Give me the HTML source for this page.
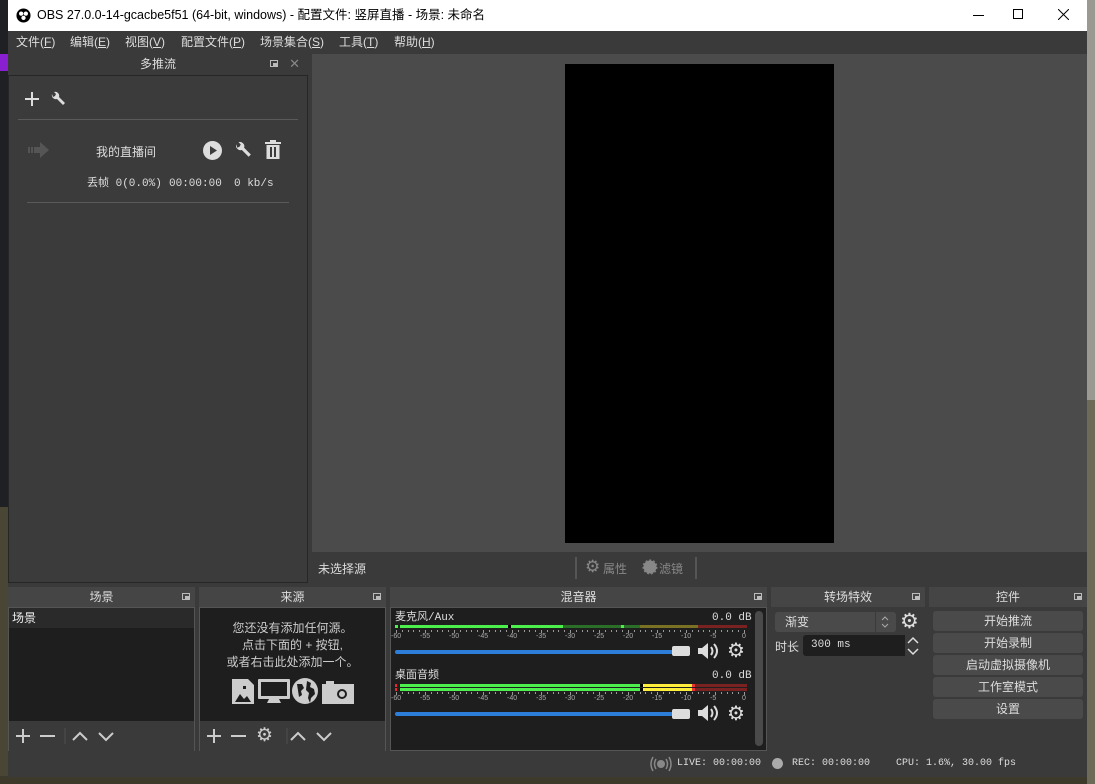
<!DOCTYPE html>
<html><head><meta charset="utf-8"><style>
*{margin:0;padding:0;box-sizing:border-box}
body{width:1095px;height:784px;overflow:hidden;background:#1f2023;font-family:"Liberation Sans","Noto Sans CJK SC",sans-serif;font-size:12px;color:#ddd;position:relative}
.a{position:absolute}
.hd{position:absolute;height:20px;background:#454545;text-align:center;line-height:20px;font-size:12px;color:#ddd}
.fl{position:absolute;right:5px;top:6px;width:8px;height:7px;border:1px solid #bbb}
.fl:after{content:"";position:absolute;left:2px;top:2px;width:5px;height:4px;background:#bbb}
.dk{position:absolute;background:#1e1e1e;border:1px solid #555}
.tb{position:absolute;background:#3a3a3a;height:30px}
.btn{position:absolute;left:933px;width:150px;height:20px;background:#4a4a4a;border-radius:3px;text-align:center;line-height:20px;color:#ddd}
.mono{font-family:"Liberation Mono","Noto Sans CJK SC",monospace}
.tk{position:absolute;font-size:7px;color:#aaa;font-family:"Liberation Sans",sans-serif}
.st{line-height:14px;height:14px}
</style></head><body>
<div class="a" style="left:0;top:54px;width:8px;height:17px;background:#8a1fd1"></div>
<div class="a" style="left:0;top:507px;width:8px;height:277px;background:#4a4636"></div>
<div class="a" style="left:0;top:776px;width:1095px;height:8px;background:#3d3a2c"></div>
<div class="a" style="left:1087px;top:0;width:8px;height:784px;background:#9a9a92"></div>
<div class="a" style="left:1087px;top:400px;width:8px;height:384px;background:#6e6a58"></div>
<div class="a" style="left:8px;top:0;width:1079px;height:777px;background:#3a3a3a"></div>
<div class="a" style="left:8px;top:0;width:1079px;height:31px;background:#fff;color:#000;font-size:12.5px;line-height:31px">
 <svg class="a" style="left:8px;top:8px" width="15" height="15" viewBox="0 0 16 16"><circle cx="8" cy="8" r="7.5" fill="#000"/><circle cx="5.5" cy="6" r="2.3" fill="#fff"/><circle cx="10.5" cy="6" r="2.3" fill="#fff"/><circle cx="8" cy="10.5" r="2.3" fill="#fff"/></svg>
 <span class="a" style="left:29px">OBS 27.0.0-14-gcacbe5f51 (64-bit, windows) - 配置文件: 竖屏直播 - 场景: 未命名</span>
 <div class="a" style="left:965px;top:15px;width:11px;height:1px;background:#000"></div>
 <div class="a" style="left:1005px;top:9px;width:10px;height:10px;border:1px solid #000"></div>
 <svg class="a" style="left:1050px;top:9px" width="11" height="11"><path d="M0 0L11 11M11 0L0 11" stroke="#000" stroke-width="1"/></svg>
</div>
<div class="a" style="left:8px;top:31px;width:1079px;height:22px;background:#3a3a3a;line-height:22px;color:#ddd">
 <span class="a" style="left:8px">文件(<u>F</u>)</span><span class="a" style="left:62px">编辑(<u>E</u>)</span><span class="a" style="left:117px">视图(<u>V</u>)</span><span class="a" style="left:173px">配置文件(<u>P</u>)</span><span class="a" style="left:252px">场景集合(<u>S</u>)</span><span class="a" style="left:331px">工具(<u>T</u>)</span><span class="a" style="left:386px">帮助(<u>H</u>)</span>
</div>
<div class="hd" style="left:8px;top:54px;width:300px;background:#3a3a3a">多推流<div class="fl" style="right:30px"></div><span class="a" style="right:8px;top:0;color:#888;font-size:13px">✕</span></div>
<div class="a" style="left:8px;top:75px;width:300px;height:508px;background:#3b3b3b;border:1px solid #262626"></div>
<div class="a" style="left:25px;top:98px;width:14px;height:2px;background:#ddd"></div><div class="a" style="left:31px;top:92px;width:2px;height:14px;background:#ddd"></div>
<svg class="a" style="left:50px;top:91px" width="16" height="16" viewBox="0 0 16 16"><path d="M2 3a4 4 0 0 0 5 5l6 6 2-2-6-6a4 4 0 0 0-5-5l2 2-1 2-2 1z" fill="#ddd"/></svg>
<div class="a" style="left:18px;top:119px;width:280px;height:1px;background:#5a5a5a"></div>
<svg class="a" style="left:28px;top:141px" width="22" height="18" viewBox="0 0 22 18"><path d="M0 6h2v6H0zM3 6h2v6H3zM6 6h6V1l9 8-9 8v-5H6z" fill="#555"/></svg>
<span class="a" style="left:96px;top:143px;font-size:12px;color:#ddd">我的直播间</span>
<svg class="a" style="left:203px;top:141px" width="19" height="19"><circle cx="9.5" cy="9.5" r="9.5" fill="#ddd"/><path d="M7 5l7 4.5-7 4.5z" fill="#3b3b3b"/></svg>
<svg class="a" style="left:234px;top:141px" width="18" height="18" viewBox="0 0 16 16"><path d="M2 3a4 4 0 0 0 5 5l6 6 2-2-6-6a4 4 0 0 0-5-5l2 2-1 2-2 1z" fill="#ddd"/></svg>
<svg class="a" style="left:265px;top:140px" width="16" height="19"><rect x="0" y="2" width="16" height="2" fill="#ddd"/><rect x="5" y="0" width="6" height="2" fill="#ddd"/><rect x="1.5" y="5" width="13" height="14" fill="#ddd"/><rect x="5" y="7" width="2" height="10" fill="#3b3b3b"/><rect x="9" y="7" width="2" height="10" fill="#3b3b3b"/></svg>
<span class="a mono st" style="left:87px;top:177px;font-size:11px;color:#ddd;white-space:pre">丢帧 0(0.0%)</span>
<span class="a mono st" style="left:169px;top:177px;font-size:11px;color:#ddd">00:00:00</span>
<span class="a mono st" style="left:234px;top:177px;font-size:11px;color:#ddd">0 kb/s</span>
<div class="a" style="left:27px;top:202px;width:262px;height:1px;background:#5a5a5a"></div>
<div class="a" style="left:312px;top:54px;width:775px;height:498px;background:#4b4b4b"></div>
<div class="a" style="left:565px;top:64px;width:269px;height:479px;background:#000"></div>
<span class="a" style="left:318px;top:560px;font-size:12px;color:#ddd">未选择源</span>
<div class="a" style="left:575px;top:557px;width:2px;height:22px;background:#222;border:1px solid #555"></div>
<div class="a" style="left:695px;top:557px;width:2px;height:22px;background:#222;border:1px solid #555"></div>
<span class="a" style="left:585px;top:558px;color:#888;font-size:17px;line-height:18px">⚙</span><span class="a" style="left:603px;top:560px;color:#888">属性</span>
<svg class="a" style="left:642px;top:559px" width="16" height="16"><circle cx="8" cy="8" r="6.5" fill="#888"/><circle cx="8" cy="8" r="7" fill="none" stroke="#888" stroke-dasharray="2 2"/></svg><span class="a" style="left:659px;top:560px;color:#888">滤镜</span>
<div class="hd" style="left:8px;top:587px;width:187px">场景<div class="fl"></div></div>
<div class="dk" style="left:8px;top:607px;width:187px;height:144px;background:#1e1e1e"></div>
<div class="a" style="left:9px;top:608px;width:185px;height:20px;background:#2a2a2a;line-height:20px;padding-left:3px;color:#eee">场景</div>
<div class="tb" style="left:9px;top:721px;width:185px"></div>
<div class="hd" style="left:199px;top:587px;width:187px">来源<div class="fl"></div></div>
<div class="dk" style="left:199px;top:607px;width:187px;height:144px"></div>
<div class="a" style="left:199px;top:620px;width:187px;text-align:center;line-height:17px;color:#ccc;font-size:12px">您还没有添加任何源。<br>点击下面的 + 按钮,<br>或者右击此处添加一个。</div>
<svg class="a" style="left:232px;top:678px" width="122" height="27" viewBox="0 0 122 27">
<path d="M0 1h16l6 6v19H0z" fill="#ccc"/><path d="M3 24l5-8 4 5 3-3 4 6z" fill="#1e1e1e"/><rect x="11" y="8" width="3" height="3" fill="#1e1e1e"/>
<rect x="26" y="1" width="32" height="20" rx="1" fill="#ccc"/><rect x="29" y="4" width="26" height="14" fill="#1e1e1e"/><path d="M37 21h10l2 4H35z" fill="#ccc"/>
<circle cx="73" cy="13" r="13" fill="#ccc"/><path d="M65 6l5 0 2 4-3 3 1 4-3 2zM75 3l4 2-1 4 4 2 1 5-4 4-1 5-2-5 1-5-3-3z" fill="#1e1e1e"/>
<path d="M90 6h4v-3h8v3h20v20H90z" fill="#ccc"/><circle cx="110" cy="16" r="5" fill="#1e1e1e"/><circle cx="110" cy="16" r="3" fill="#ccc"/>
</svg>
<div class="tb" style="left:200px;top:721px;width:185px"></div>
<svg class="a" style="left:14px;top:727px" width="110" height="18" stroke="#ccc" stroke-width="2" fill="none"><path d="M2 9h14M9 2v14M26 9h15"/><path d="M51 1v16" stroke="#444"/><path d="M59 13l7-7 7 7M85 6l7 7 7-7"/></svg>
<svg class="a" style="left:205px;top:727px" width="140" height="18" stroke="#ccc" stroke-width="2" fill="none"><path d="M2 9h14M9 2v14M26 9h15"/><path d="M82 1v16" stroke="#444"/><path d="M86 13l7-7 7 7M112 6l7 7 7-7"/></svg>
<span class="a" style="left:256px;top:724px;color:#ccc;font-size:19px">⚙</span>
<div class="hd" style="left:390px;top:587px;width:377px">混音器<div class="fl"></div></div>
<div class="dk" style="left:390px;top:607px;width:377px;height:144px"></div>
<div class="a" style="left:755px;top:611px;width:8px;height:135px;background:#4a4a4a;border-radius:4px"></div>
<span class="a mono st" style="left:395px;top:611px;font-size:11px;color:#ddd">麦克风/Aux</span>
<span class="a mono st" style="left:712px;top:611px;font-size:11px;color:#ddd">0.0 dB</span>
<div class="a" style="left:395px;top:625px;width:352px;height:3px;background:#7a2121"></div>
<div class="a" style="left:395px;top:625px;width:303px;height:3px;background:#7a7125"></div>
<div class="a" style="left:395px;top:625px;width:245px;height:3px;background:#2a6e27"></div>
<div class="a" style="left:395px;top:625px;width:168px;height:3px;background:#4cf04c"></div>
<div class="a" style="left:398px;top:625px;width:2px;height:3px;background:#1e1e1e"></div>
<div class="a" style="left:508px;top:625px;width:3px;height:3px;background:#000"></div>
<div class="a" style="left:621px;top:625px;width:3px;height:3px;background:#4cf04c"></div>
<span class="a mono st" style="left:395px;top:669px;font-size:11px;color:#ddd">桌面音频</span>
<span class="a mono st" style="left:712px;top:669px;font-size:11px;color:#ddd">0.0 dB</span>
<div class="a" style="left:395px;top:684px;width:352px;height:7px;background:#7a2121"></div>
<div class="a" style="left:395px;top:684px;width:297px;height:7px;background:#ffef3a"></div>
<div class="a" style="left:395px;top:684px;width:247px;height:7px;background:#4cf04c"></div>
<div class="a" style="left:692px;top:684px;width:3px;height:7px;background:#e33"></div>
<div class="a" style="left:395px;top:684px;width:2px;height:7px;background:#e23"></div>
<div class="a" style="left:397px;top:684px;width:3px;height:7px;background:#1e1e1e"></div>
<div class="a" style="left:640px;top:684px;width:3px;height:7px;background:#000"></div>
<div class="a" style="left:395px;top:687px;width:352px;height:1px;background:#1e1e1e"></div>
<div class="a" style="left:395px;top:650px;width:282px;height:4px;background:#2d7ed9;border-radius:2px"></div>
<div class="a" style="left:672px;top:646px;width:18px;height:10px;background:#ddd;border-radius:2px"></div>
<div class="a" style="left:395px;top:712px;width:282px;height:4px;background:#2d7ed9;border-radius:2px"></div>
<div class="a" style="left:672px;top:709px;width:18px;height:10px;background:#ddd;border-radius:2px"></div>
<svg class="a" style="left:697px;top:642px" width="24" height="18"><path d="M1 6h4l6-5v16l-6-5H1z" fill="#ddd"/><path d="M14 5q3 4 0 8M17 2q6 7 0 14" stroke="#ddd" stroke-width="2" fill="none"/></svg>
<svg class="a" style="left:697px;top:704px" width="24" height="18"><path d="M1 6h4l6-5v16l-6-5H1z" fill="#ddd"/><path d="M14 5q3 4 0 8M17 2q6 7 0 14" stroke="#ddd" stroke-width="2" fill="none"/></svg>
<span class="a" style="left:727px;top:638px;font-size:20px;color:#ddd">⚙</span>
<span class="a" style="left:727px;top:701px;font-size:20px;color:#ddd">⚙</span>
<div id="ticks1"></div>
<div class="hd" style="left:771px;top:587px;width:154px">转场特效<div class="fl"></div></div>
<div class="a" style="left:771px;top:607px;width:154px;height:144px;background:#3a3a3a"></div>
<div class="a" style="left:775px;top:612px;width:121px;height:20px;background:#4a4a4a;border-radius:3px;line-height:20px;padding-left:10px;color:#ddd">渐变</div>
<div class="a" style="left:875px;top:612px;width:1px;height:20px;background:#3a3a3a"></div>
<svg class="a" style="left:880px;top:614px" width="10" height="16" stroke="#aaa" stroke-width="1" fill="none"><path d="M2 6l3-3 3 3M2 10l3 3 3-3"/></svg>
<span class="a" style="left:900px;top:609px;font-size:21px;color:#ddd">⚙</span>
<span class="a" style="left:775px;top:638px;color:#ddd">时长</span>
<div class="a" style="left:803px;top:635px;width:118px;height:21px;background:#1e1e1e;border-radius:3px;line-height:21px;padding-left:8px;color:#ddd;font-family:'Liberation Mono',monospace;font-size:11px">300 ms</div>
<div class="a" style="left:905px;top:635px;width:16px;height:21px;background:#3a3a3a"></div>
<svg class="a" style="left:906px;top:636px" width="14" height="20" stroke="#ddd" stroke-width="1.5" fill="none"><path d="M2 7l5-5 5 5M2 13l5 5 5-5"/></svg>
<div class="hd" style="left:929px;top:587px;width:158px">控件<div class="fl"></div></div>
<div class="btn" style="top:611px">开始推流</div>
<div class="btn" style="top:633px">开始录制</div>
<div class="btn" style="top:655px">启动虚拟摄像机</div>
<div class="btn" style="top:677px">工作室模式</div>
<div class="btn" style="top:699px">设置</div>
<svg class="a" style="left:650px;top:756px" width="22" height="16"><circle cx="11" cy="8" r="4" fill="#888"/><path d="M6 3q-3 5 0 10M16 3q3 5 0 10M3 1q-4 7 0 14M19 1q4 7 0 14" stroke="#888" stroke-width="1.5" fill="none"/></svg>
<span class="a mono" style="left:677px;top:758px;font-size:10px;color:#ddd;white-space:pre">LIVE: 00:00:00</span>
<div class="a" style="left:772px;top:758px;width:11px;height:11px;border-radius:50%;background:#aaa"></div>
<span class="a mono" style="left:792px;top:758px;font-size:10px;color:#ddd;white-space:pre">REC: 00:00:00</span>
<span class="a mono" style="left:896px;top:758px;font-size:10px;color:#ddd;white-space:pre">CPU: 1.6%, 30.00 fps</span>
<script>
var labs=["-60","-55","-50","-45","-40","-35","-30","-25","-20","-15","-10","-5","0"];
var h="";
[630,692].forEach(function(y){
 for(var i=0;i<=60;i++){var x=396+i*5.8;h+='<div class="a" style="left:'+x.toFixed(1)+'px;top:'+y+'px;width:1px;height:'+(i%5==0?3:2)+'px;background:#999"></div>';}
 labs.forEach(function(l,i){var x=396+i*29-(i==12?2:5);h+='<span class="tk" style="left:'+x+'px;top:'+(y+3)+'px">'+l+'</span>';});
});
document.getElementById("ticks1").innerHTML=h;
</script>
</body></html>
